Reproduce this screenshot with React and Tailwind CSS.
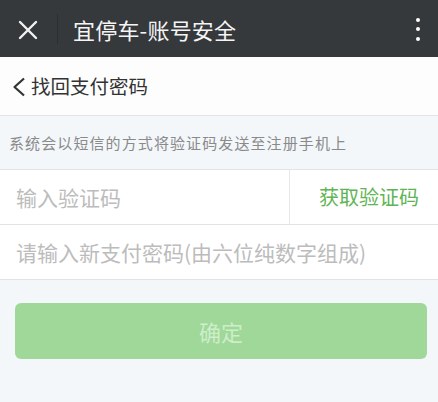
export default function App() {
  return (
    <div
      className="w-[438px] h-[402px] bg-[#f4f7fa] overflow-hidden"
      style={{ fontFamily: '"Noto Sans CJK SC", "Noto Sans", sans-serif' }}
    >
      {/* top bar */}
      <div className="h-[57px] bg-[#36393c] flex items-center">
        <div className="w-[57px] h-full flex items-center justify-center">
          <svg width="20" height="20" viewBox="0 0 20 20" className="ml-[-2px] mt-[2px]">
            <path d="M2 2 L18 18 M18 2 L2 18" stroke="#f2f2f2" strokeWidth="2.4" strokeLinecap="round" />
          </svg>
        </div>
        <div className="w-px h-[30px] bg-[#2c2f32]" />
        <div className="ml-[15px] text-[22px] leading-none text-[#f5f5f5] tracking-[0.2px] mt-[1px]">
          宜停车-账号安全
        </div>
        <div className="ml-auto mr-[18px] flex flex-col gap-[5.5px] mt-[1px]">
          <span className="w-[4px] h-[4px] rounded-full bg-white" />
          <span className="w-[4px] h-[4px] rounded-full bg-white" />
          <span className="w-[4px] h-[4px] rounded-full bg-white" />
        </div>
      </div>

      {/* page title */}
      <div className="h-[59px] bg-[#fdfdfd] border-b border-[#e2e4e6] flex items-center pl-[12px]">
        <svg width="14" height="20" viewBox="0 0 14 20" className="mt-[1px]">
          <path d="M12 1.5 L2.5 10 L12 18.5" stroke="#333" strokeWidth="2.2" fill="none" strokeLinejoin="round" />
        </svg>
        <span className="ml-[5px] text-[19.5px] leading-none text-[#333]">找回支付密码</span>
      </div>

      {/* hint */}
      <div className="h-[54px] bg-[#f3f7fa] border-b border-[#e2e5e8] flex items-center pl-[9px]">
        <span className="text-[15px] leading-none text-[#8a8a8a] tracking-[1.1px]">
          系统会以短信的方式将验证码发送至注册手机上
        </span>
      </div>

      {/* code row */}
      <div className="h-[55px] bg-white border-b border-[#e2e5e8] flex">
        <div className="flex-1 flex items-center pl-[16px]">
          <span className="text-[21px] leading-none text-[#bcbcbc]">输入验证码</span>
        </div>
        <div className="w-[149px] border-l border-[#e6e8ea] flex items-center justify-center">
          <span className="text-[20px] leading-none text-[#5fb454] ml-[10px]">获取验证码</span>
        </div>
      </div>

      {/* password row */}
      <div className="h-[55px] bg-white border-b border-[#e2e5e8] flex items-center pl-[16px]">
        <span className="text-[21px] leading-none text-[#bcbcbc]">请输入新支付密码(由六位纯数字组成)</span>
      </div>

      {/* confirm */}
      <div className="pl-[15px] pr-[11px] pt-[23px]">
        <button
          type="button"
          className="w-full h-[56px] rounded-[6px] bg-[#9fd899] flex items-center justify-center"
        >
          <span className="text-[22px] leading-none text-[#cdeec9]">确定</span>
        </button>
      </div>
    </div>
  );
}
